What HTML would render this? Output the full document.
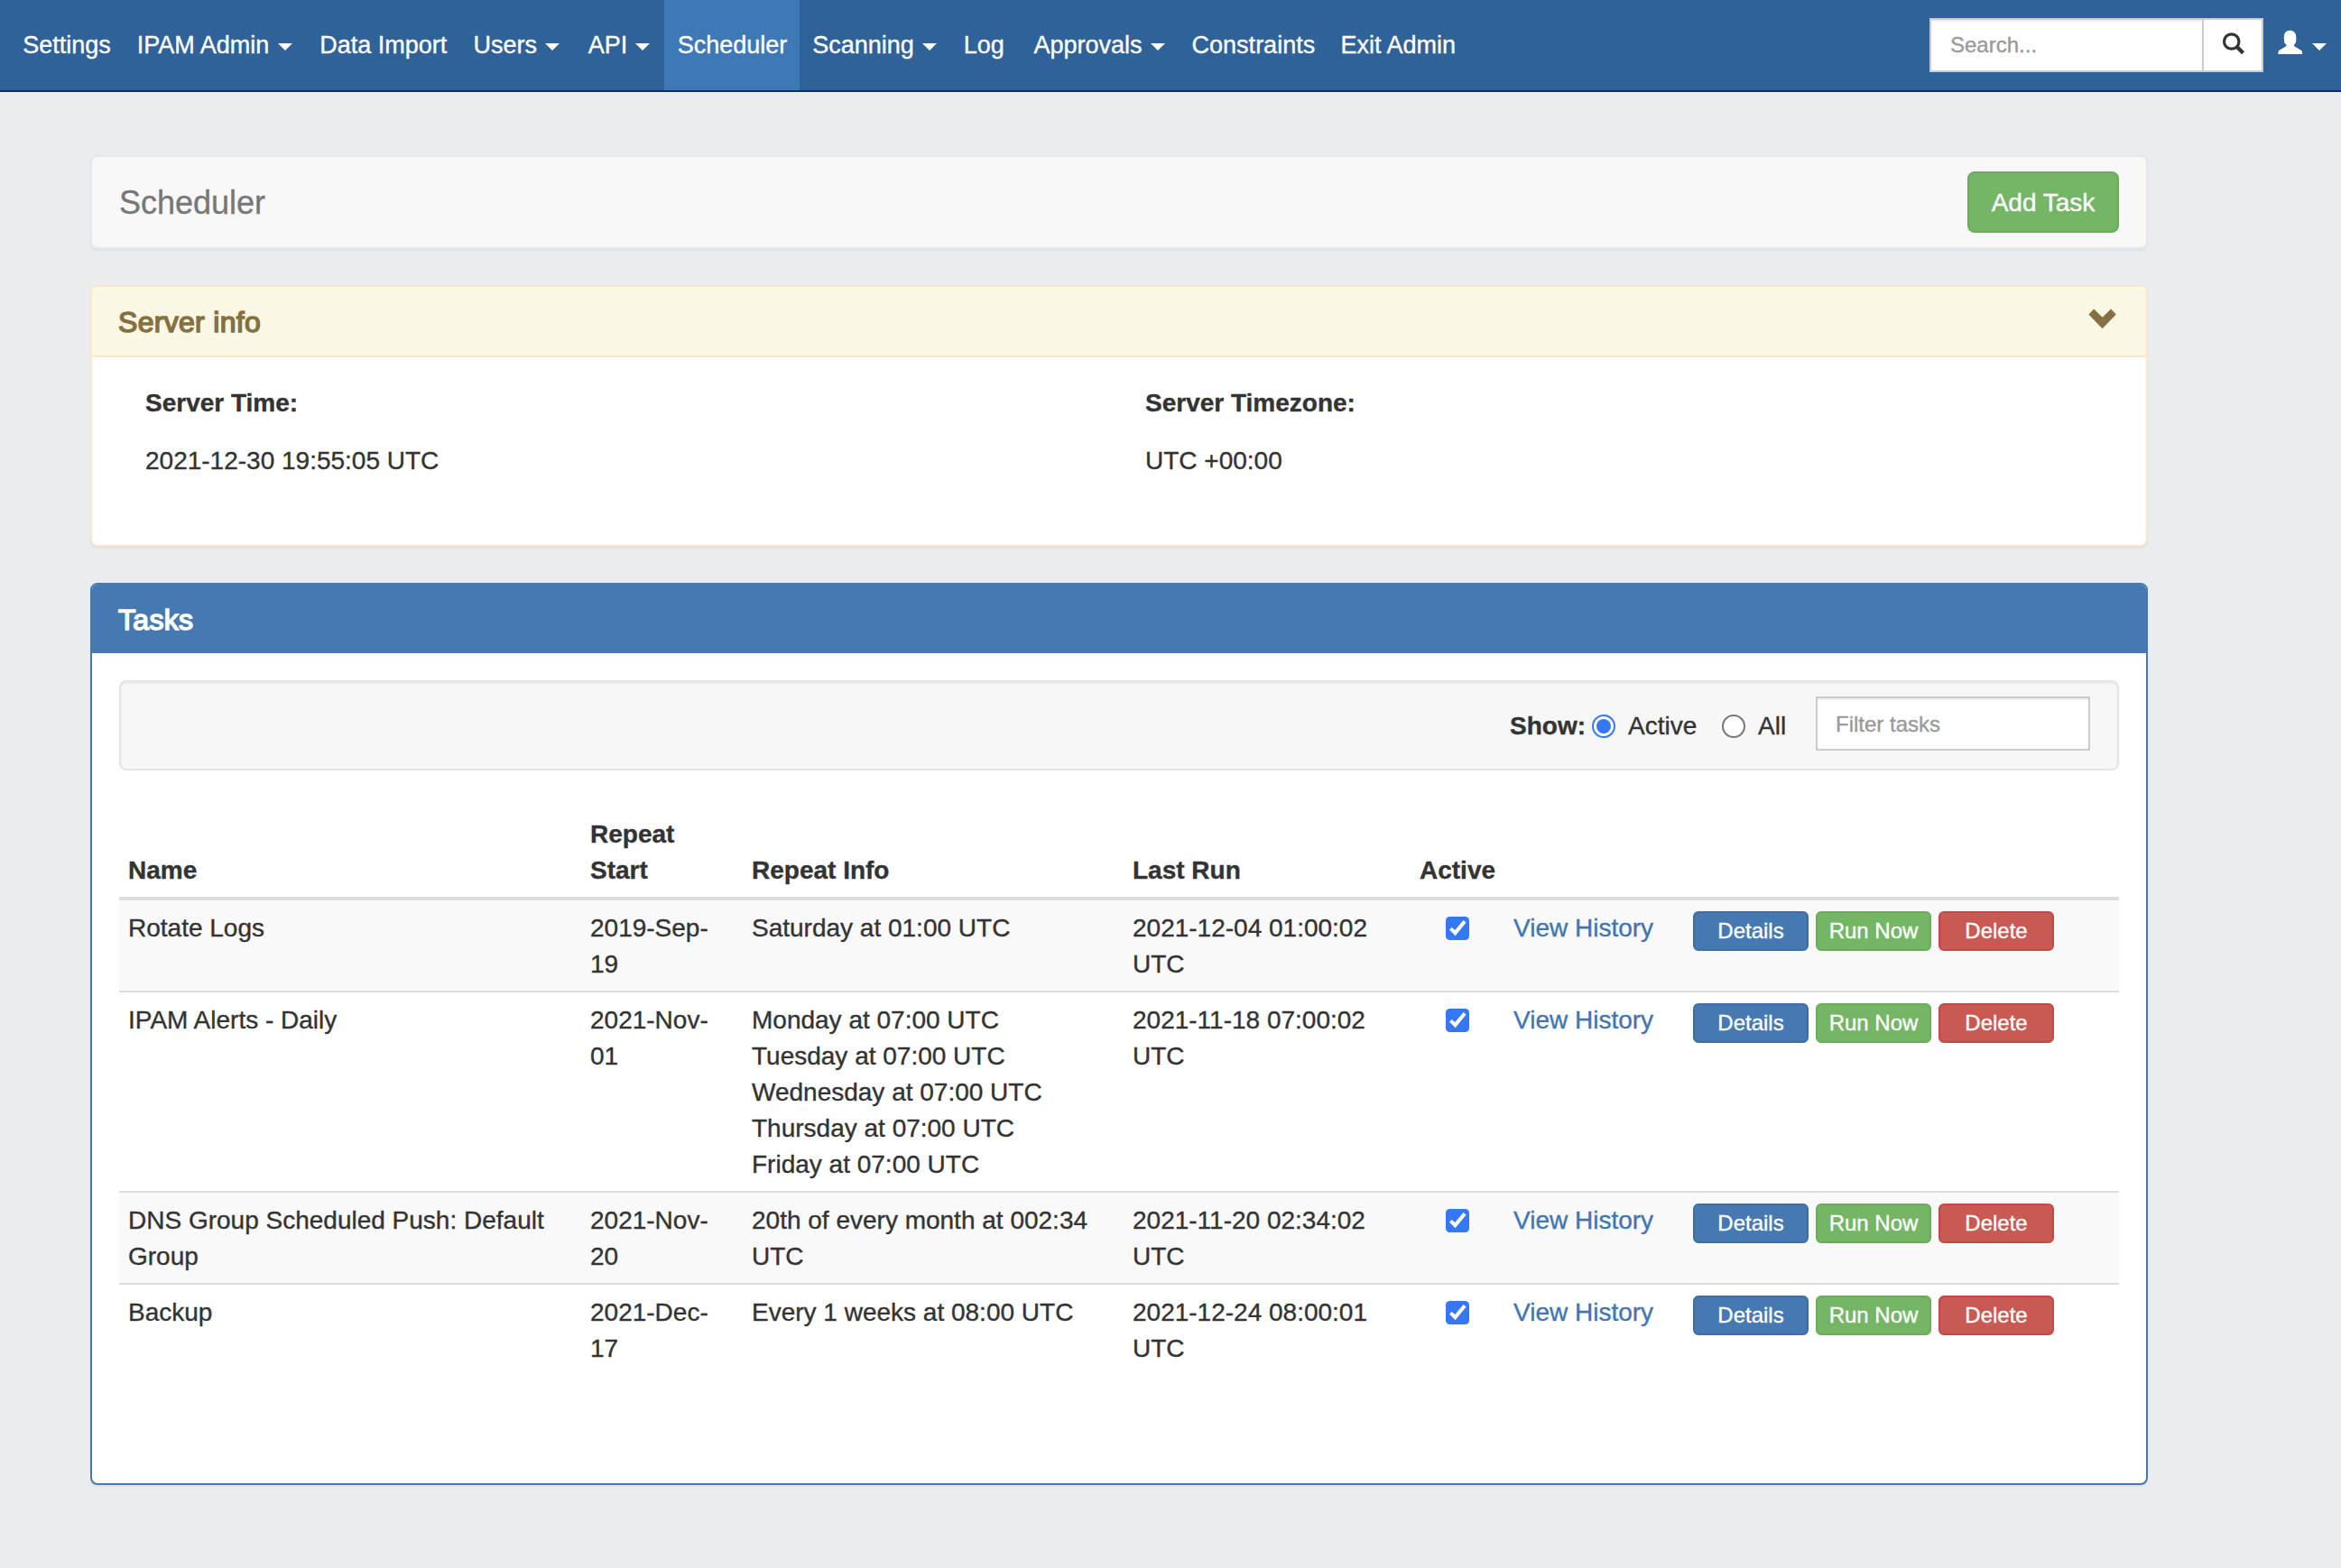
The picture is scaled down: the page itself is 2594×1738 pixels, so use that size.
<!DOCTYPE html>
<html><head><meta charset="utf-8">
<style>
*{box-sizing:border-box;margin:0;padding:0}
html,body{width:2594px;height:1738px;overflow:hidden}
body{background:#eaedf0;font-family:"Liberation Sans",sans-serif;font-size:28px;line-height:40px;color:#333;position:relative;-webkit-text-stroke:0.35px currentColor}
.abs{position:absolute}
/* navbar */
.nav{position:absolute;left:0;top:0;width:2594px;height:102px;background:#2e6299;border-bottom:2px solid #132d55}
.nav .it{position:absolute;top:0px;height:100px;line-height:100px;color:#fff;font-size:27px;white-space:nowrap}
.nav .act{background:#3d79b7}
.caret{display:inline-block;width:0;height:0;border-left:8px solid transparent;border-right:8px solid transparent;border-top:8px solid #fff;vertical-align:middle;margin-left:4px;position:relative;top:-2px}
.search{position:absolute;left:2138px;top:20px;width:304px;height:60px;background:#fff;border:2px solid #ccc;color:#999;font-size:24px;line-height:56px;padding-left:21px;box-shadow:inset 0 2px 2px rgba(0,0,0,.075)}
.sbtn{position:absolute;left:2440px;top:20px;width:68px;height:60px;background:#fff;border:2px solid #ccc}
/* panels */
.phead{position:absolute;left:100px;top:172px;width:2280px;height:104px;background:#f8f8f8;border:2px solid #e7e7e7;border-radius:8px;box-shadow:0 2px 2px rgba(0,0,0,.05)}
.phead .t{position:absolute;left:30px;top:11px;font-size:36px;line-height:80px;color:#777}
.btn{position:absolute;color:#fff;text-align:center;border-radius:8px;white-space:nowrap}
.btn-success{background:#74b566;border:2px solid #6aab5c}
.btn-primary{background:#4679b2;border:2px solid #3f6da3}
.btn-danger{background:#c95953;border:2px solid #c14a45}
.addtask{left:2180px;top:190px;width:168px;height:68px;font-size:28px;line-height:66px}
.sinfo{position:absolute;left:100px;top:316px;width:2280px;height:290px;background:#fff;border:2px solid #f6e8c9;border-radius:8px;overflow:hidden;box-shadow:0 2px 2px rgba(0,0,0,.05)}
.sinfo .hd{height:78px;background:#faf7e4;border-bottom:2px solid #f6e8c9;padding:22px 29px;font-size:32px;line-height:35px;color:#87703f;font-weight:normal;-webkit-text-stroke:1.5px #87703f;letter-spacing:0.3px}
.tasks{position:absolute;left:100px;top:646px;width:2280px;height:1000px;background:#fff;border:2px solid #4679b2;border-radius:8px;overflow:hidden;box-shadow:0 2px 2px rgba(0,0,0,.05)}
.tasks .hd{height:76px;background:#4679b2;padding:22px 29px;font-size:32px;line-height:35px;color:#fff;font-weight:normal;-webkit-text-stroke:1.5px #fff;letter-spacing:0.3px}
.well{position:absolute;left:30px;top:106px;width:2216px;height:100px;background:#f7f7f7;border:2px solid #e3e3e3;border-radius:8px;box-shadow:inset 0 2px 2px rgba(0,0,0,.05)}
table{position:absolute;left:30px;top:246px;width:2216px;border-collapse:collapse;table-layout:fixed;white-space:nowrap}
.ac{text-align:center}
th{font-weight:bold;text-align:left;vertical-align:bottom;padding:11px 10px 9px;border-bottom:4px solid #ddd}
td{vertical-align:top;padding:11px 10px 9px;border-top:2px solid #ddd}
tr.odd td{background:#f9f9f9}
a{color:#4075b1;text-decoration:none}
.cb{display:inline-block;width:26px;height:26px;background:#3478f6;border-radius:4.5px;position:relative;top:7px;vertical-align:top}
.cb svg{position:absolute;left:0;top:0}
.rb{position:absolute;border-radius:50%}
.sm{display:inline-block;width:128px;height:44px;font-size:24px;line-height:40px;position:relative;top:0px;margin-right:8px;border-radius:6px;text-align:center;color:#fff;vertical-align:top}
.bt{padding-top:12px}
</style></head><body>
<div class="nav">
  <div class="act" style="position:absolute;left:736px;top:0;width:150px;height:100px"></div>
  <div class="it" style="left:25.2px">Settings</div>
  <div class="it" style="left:151.8px">IPAM Admin</div>
  <div class="it" style="left:354.2px">Data Import</div>
  <div class="it" style="left:524.4px">Users</div>
  <div class="it" style="left:651.7px">API</div>
  <div class="it" style="left:750.7px">Scheduler</div>
  <div class="it" style="left:900.2px">Scanning</div>
  <div class="it" style="left:1067.7px">Log</div>
  <div class="it" style="left:1145.5px">Approvals</div>
  <div class="it" style="left:1320.6px">Constraints</div>
  <div class="it" style="left:1485.5px">Exit Admin</div>
  <div class="caret" style="position:absolute;left:308.4px;top:48px;margin:0"></div>
  <div class="caret" style="position:absolute;left:604.0px;top:48px;margin:0"></div>
  <div class="caret" style="position:absolute;left:704.0px;top:48px;margin:0"></div>
  <div class="caret" style="position:absolute;left:1022.0px;top:48px;margin:0"></div>
  <div class="caret" style="position:absolute;left:1274.5px;top:48px;margin:0"></div>
  <div class="search">Search...</div>
  <div class="sbtn"></div>
</div>

<div class="phead"><div class="t">Scheduler</div></div>
<div class="btn btn-success addtask">Add Task</div>

<div class="sinfo">
  <div class="hd">Server info</div>
  <div class="abs" style="left:59px;top:109px;font-weight:bold">Server Time:</div>
  <div class="abs" style="left:59px;top:173px">2021-12-30 19:55:05 UTC</div>
  <div class="abs" style="left:1167px;top:109px;font-weight:bold">Server Timezone:</div>
  <div class="abs" style="left:1167px;top:173px">UTC +00:00</div>
</div>

<div class="tasks">
  <div class="hd">Tasks</div>
  <div class="well">
    <div class="abs" style="left:1539px;top:29px;font-weight:bold">Show:</div>
    <div class="rb" style="left:1630px;top:36px;width:26px;height:26px;border:2px solid #3478f6;background:#fff"><div class="rb" style="left:3px;top:3px;width:16px;height:16px;background:#3478f6"></div></div>
    <div class="abs" style="left:1670px;top:29px">Active</div>
    <div class="rb" style="left:1774px;top:36px;width:26px;height:26px;border:2px solid #777;background:#fff"></div>
    <div class="abs" style="left:1814px;top:29px">All</div>
    <div class="abs" style="left:1878px;top:16px;width:304px;height:60px;background:#fff;border:2px solid #ccc;color:#999;font-size:24px;line-height:58px;padding-left:20px;box-shadow:inset 0 2px 2px rgba(0,0,0,.075)">Filter tasks</div>
  </div>
  <table>
    <colgroup><col style="width:512px"><col style="width:179px"><col style="width:422px"><col style="width:318px"><col style="width:104px"><col style="width:199px"><col style="width:482px"></colgroup>
    <thead><tr><th>Name</th><th>Repeat<br>Start</th><th>Repeat Info</th><th>Last Run</th><th>Active</th><th></th><th></th></tr></thead>
    <tbody>
    <tr class="odd"><td>Rotate Logs</td><td>2019-Sep-<br>19</td><td>Saturday at 01:00 UTC</td><td>2021-12-04 01:00:02<br>UTC</td><td class="ac"><span class="cb"><svg width="26" height="26" viewBox="0 0 26 26"><path d="M4 14.5 L6.7 11.9 L10.3 15 L19.5 4.1 L22.6 6.6 L10.6 21.2 Z" fill="#fff"/></svg></span></td><td><a>View History</a></td><td class="bt"><span class="sm btn-primary">Details</span><span class="sm btn-success">Run Now</span><span class="sm btn-danger">Delete</span></td></tr>
    <tr class=""><td>IPAM Alerts - Daily</td><td>2021-Nov-<br>01</td><td>Monday at 07:00 UTC<br>Tuesday at 07:00 UTC<br>Wednesday at 07:00 UTC<br>Thursday at 07:00 UTC<br>Friday at 07:00 UTC</td><td>2021-11-18 07:00:02<br>UTC</td><td class="ac"><span class="cb"><svg width="26" height="26" viewBox="0 0 26 26"><path d="M4 14.5 L6.7 11.9 L10.3 15 L19.5 4.1 L22.6 6.6 L10.6 21.2 Z" fill="#fff"/></svg></span></td><td><a>View History</a></td><td class="bt"><span class="sm btn-primary">Details</span><span class="sm btn-success">Run Now</span><span class="sm btn-danger">Delete</span></td></tr>
    <tr class="odd"><td>DNS Group Scheduled Push: Default<br>Group</td><td>2021-Nov-<br>20</td><td>20th of every month at 002:34<br>UTC</td><td>2021-11-20 02:34:02<br>UTC</td><td class="ac"><span class="cb"><svg width="26" height="26" viewBox="0 0 26 26"><path d="M4 14.5 L6.7 11.9 L10.3 15 L19.5 4.1 L22.6 6.6 L10.6 21.2 Z" fill="#fff"/></svg></span></td><td><a>View History</a></td><td class="bt"><span class="sm btn-primary">Details</span><span class="sm btn-success">Run Now</span><span class="sm btn-danger">Delete</span></td></tr>
    <tr class=""><td>Backup</td><td>2021-Dec-<br>17</td><td>Every 1 weeks at 08:00 UTC</td><td>2021-12-24 08:00:01<br>UTC</td><td class="ac"><span class="cb"><svg width="26" height="26" viewBox="0 0 26 26"><path d="M4 14.5 L6.7 11.9 L10.3 15 L19.5 4.1 L22.6 6.6 L10.6 21.2 Z" fill="#fff"/></svg></span></td><td><a>View History</a></td><td class="bt"><span class="sm btn-primary">Details</span><span class="sm btn-success">Run Now</span><span class="sm btn-danger">Delete</span></td></tr>
    </tbody>
  </table>
</div>

<svg class="abs" style="left:0;top:0;pointer-events:none" width="2594" height="400" viewBox="0 0 2594 400">
  <circle cx="2472.7" cy="46" r="8.2" stroke="#333" stroke-width="3.2" fill="none"/>
  <path d="M2478.5 51.8 L2485.5 58.8" stroke="#333" stroke-width="4.2" stroke-linecap="butt"/>
  <path d="M2537.5 33.8 C2533 33.8 2530.8 37 2530.8 41 L2530.8 44 C2530.8 47 2532 48.6 2533.4 49.4 L2533.4 51 L2526 55.6 C2524.8 56.4 2524.4 57 2524.4 58 L2524.4 60 L2551 60 L2551 58 C2551 57 2550.6 56.4 2549.4 55.6 L2542 51 L2542 49.4 C2543.4 48.6 2544.3 47 2544.3 44 L2544.3 41 C2544.3 37 2542 33.8 2537.5 33.8 Z" fill="#fff"/>
  <path d="M2562 48 L2578 48 L2570 56 Z" fill="#fff"/>
  <path d="M2320.2 342.4 L2314.4 348.4 L2329.6 364.2 L2344.8 348.4 L2339 342.4 L2329.6 351.8 Z" fill="#866f42"/>
</svg>
</body></html>
